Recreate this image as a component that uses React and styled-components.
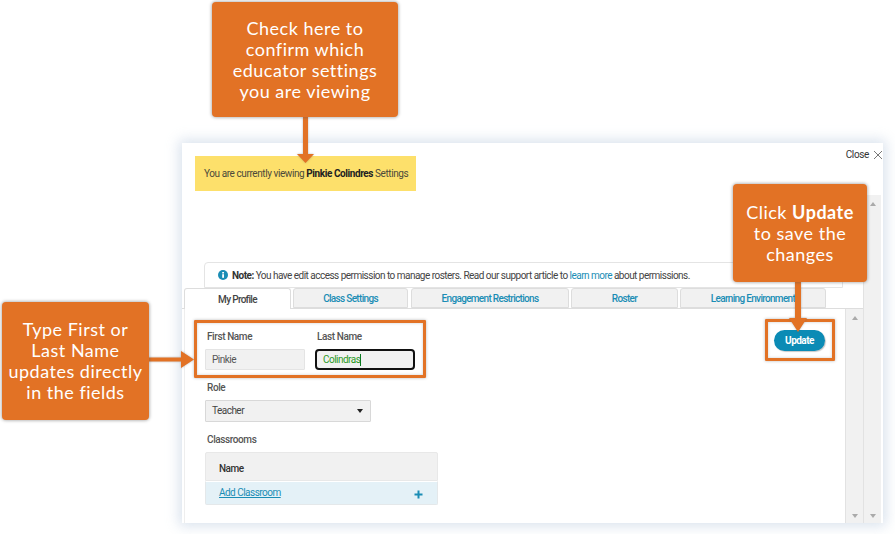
import React from "react";
import styled, { createGlobalStyle } from "styled-components";

const Global = createGlobalStyle`
  html, body { margin: 0; padding: 0; background: #fff; }
  body { font-family: "Roboto", "Liberation Sans", sans-serif; }
`;

const Stage = styled.div`
  position: relative;
  width: 895px;
  height: 534px;
  overflow: hidden;
  padding: 143px 12px 11px 182px;
  box-sizing: border-box;
`;

const Modal = styled.div`
  position: relative;
  height: 380px;
  display: flex;
  flex-direction: column;
  background: #fff;
  box-shadow: 0 0 12px 3px rgba(170, 190, 215, 0.45);
  color: #444;
  font-size: 10px;
  letter-spacing: -0.52px;
`;

const TopArea = styled.div`
  height: 119px;
  box-sizing: border-box;
  padding: 13px 13px 0;
  display: flex;
  justify-content: space-between;
  align-items: flex-start;
`;

const Banner = styled.div`
  width: 221px;
  height: 35px;
  box-sizing: border-box;
  padding-left: 9px;
  display: flex;
  align-items: center;
  background: #fde06b;
  color: #4c4a3a;
  font-size: 10px;
  letter-spacing: -0.42px;
  white-space: pre;
  b { color: #222; font-weight: 700; }
`;

const Close = styled.div`
  display: flex;
  align-items: center;
  gap: 4px;
  margin: -7px -13px 0 0;
  color: #333;
  font-size: 10px;
  letter-spacing: -0.35px;
  svg { display: block; }
`;

const Body = styled.div`
  flex: 1;
  display: flex;
  min-height: 0;
`;

const Main = styled.div`
  flex: 1;
  display: flex;
  flex-direction: column;
  min-width: 0;
`;

const Note = styled.div`
  margin-left: 22px;
  width: 639px;
  height: 26px;
  box-sizing: border-box;
  display: flex;
  align-items: center;
  padding-left: 13px;
  gap: 4px;
  border: 1px solid #e4e4e4;
  border-radius: 4px 0 0 0;
  white-space: pre;
  color: #444;
  b { color: #333; font-weight: 700; }
`;

const NoteLink = styled.span`
  color: #1a8db5;
`;

const Tabs = styled.div`
  display: flex;
  gap: 2px;
  height: 21px;
  padding-left: 2px;
  border-bottom: 1px solid #ddd;
  box-sizing: border-box;
`;

const Tab = styled.div`
  width: ${(p) => p.$w}px;
  margin-right: ${(p) => p.$gap || 0}px;
  height: ${(p) => (p.$active ? 21 : 20)}px;
  box-sizing: border-box;
  display: flex;
  align-items: center;
  justify-content: center;
  background: ${(p) => (p.$active ? "#fff" : "#f1f1f1")};
  border: 1px solid #ddd;
  border-bottom: ${(p) => (p.$active ? "none" : "1px solid #ddd")};
  border-radius: 3px 3px 0 0;
  font-weight: 500;
  letter-spacing: -0.68px;
  color: ${(p) => (p.$active ? "#444" : "#1a8db5")};
`;

const Pane = styled.div`
  flex: 1;
  display: flex;
  min-height: 0;
`;

const Form = styled.div`
  flex: 1;
  padding: 21px 0 0 20px;
  display: flex;
  flex-direction: column;
  align-items: flex-start;
  border-left: 1px solid #eee;
  margin-left: 2px;
  box-sizing: border-box;
  position: relative;
`;

const NameRow = styled.div`
  display: flex;
  gap: 10px;
`;

const Field = styled.div`
  display: flex;
  flex-direction: column;
`;

const Label = styled.div`
  height: ${(p) => p.$h}px;
  padding-left: 2px;
  margin-top: ${(p) => p.$top || 0}px;
  color: #555;
  font-weight: 500;
  font-size: 10px;
  letter-spacing: -0.4px;
  line-height: 13px;
`;

const Input = styled.div`
  width: 100px;
  height: 21px;
  box-sizing: border-box;
  display: flex;
  align-items: center;
  padding-left: ${(p) => (p.$focus ? 6 : 6)}px;
  background: #f1f1f1;
  border: ${(p) => (p.$focus ? "2px solid #111" : "1px solid #e4e4e4")};
  border-radius: ${(p) => (p.$focus ? 4 : 1)}px;
  color: ${(p) => (p.$focus ? "#2a9a1f" : "#555")};
`;

const Caret = styled.span`
  width: 1px;
  height: 12px;
  background: #0a7a20;
`;

const Select = styled.div`
  width: 166px;
  height: 22px;
  box-sizing: border-box;
  display: flex;
  align-items: center;
  justify-content: space-between;
  padding: 0 7px 1px 6px;
  background: #f1f1f1;
  border: 1px solid #d8d8d8;
  border-radius: 1px;
  color: #444;
  &::after {
    content: "";
    border-left: 3.5px solid transparent;
    border-right: 3.5px solid transparent;
    border-top: 4px solid #222;
  }
`;

const Table = styled.div`
  width: 233px;
`;

const TableHead = styled.div`
  height: 29px;
  box-sizing: border-box;
  display: flex;
  align-items: center;
  padding: 3px 0 0 13px;
  background: #f1f1f1;
  border: 1px solid #e8e8e8;
  border-radius: 2px 2px 0 0;
  color: #333;
  font-weight: 500;
`;

const TableRow = styled.div`
  height: 24px;
  box-sizing: border-box;
  display: flex;
  align-items: center;
  justify-content: space-between;
  padding: 0 14px 0 13px;
  background: #e4f1f7;
  border: 1px solid #e4e8ea;
  border-top-color: #fff;
  border-radius: 0 0 2px 2px;
  color: #1a8db5;
  span { text-decoration: underline; margin-top: -2px; }
`;

const Plus = styled.svg`
  display: block;
  margin-top: 2px;
`;

const UpdateButton = styled.div`
  position: absolute;
  top: 21px;
  right: 20px;
  width: 51px;
  height: 21px;
  box-sizing: border-box;
  padding-bottom: 1px;
  display: flex;
  align-items: center;
  justify-content: center;
  background: #0b8bb5;
  color: #fff;
  font-weight: 700;
  border-radius: 11px;
  box-shadow: 1px 1px 1px #c8c8c8;
`;

const Scrollbar = styled.div`
  width: 18px;
  background: #f1f1f1;
  border-left: 1px solid #e2e2e2;
  box-sizing: border-box;
  display: flex;
  flex-direction: column;
  justify-content: space-between;
  align-items: center;
  padding: 7px 0 5px;
  flex: none;
  margin-top: ${(p) => p.$top || 0}px;
  margin-right: ${(p) => p.$right || 0}px;
`;

const ArrowUp = styled.i`
  border-left: 3.5px solid transparent;
  border-right: 3.5px solid transparent;
  border-bottom: 4px solid #aaa;
`;

const ArrowDown = styled.i`
  border-left: 3.5px solid transparent;
  border-right: 3.5px solid transparent;
  border-top: 4px solid #aaa;
`;

const Callout = styled.div`
  position: absolute;
  left: ${(p) => p.$x}px;
  top: ${(p) => p.$y}px;
  width: ${(p) => p.$w}px;
  height: ${(p) => p.$h}px;
  box-sizing: border-box;
  display: flex;
  align-items: center;
  justify-content: center;
  text-align: center;
  background: #e27225;
  color: #fff;
  border-radius: 4px;
  box-shadow: 0 0 3px 1px rgba(90, 90, 90, 0.4);
  font-family: "Lato", "Open Sans", sans-serif;
  font-size: 18px;
  line-height: 21px;
  letter-spacing: 0.5px;
  b { font-weight: 700; }
`;

const Frame = styled.div`
  position: absolute;
  left: ${(p) => p.$x}px;
  top: ${(p) => p.$y}px;
  width: ${(p) => p.$w}px;
  height: ${(p) => p.$h}px;
  box-sizing: border-box;
  border: 3px solid #e27225;
  border-radius: 1px;
  box-shadow: 0 0 3px rgba(90, 90, 90, 0.45), inset 0 0 3px rgba(90, 90, 90, 0.3);
`;

const Pointer = styled.svg`
  position: absolute;
  left: ${(p) => p.$x}px;
  top: ${(p) => p.$y}px;
  filter: drop-shadow(0 0 1px rgba(90, 90, 90, 0.4));
`;

export default function App() {
  return (
    <>
      <Global />
      <Stage>
        <Modal>
          <TopArea>
            <Banner>
              You are currently viewing <b>Pinkie Colindres</b> Settings
            </Banner>
            <Close>
              Close
              <svg width="10" height="10" viewBox="0 0 10 10">
                <path d="M1 1l8 8M9 1l-8 8" stroke="#555" strokeWidth="0.8" fill="none" />
              </svg>
            </Close>
          </TopArea>
          <Body>
            <Main>
              <Note>
                <svg width="10" height="10" viewBox="0 0 10 10">
                  <circle cx="5" cy="5" r="5" fill="#1a8db5" />
                  <rect x="4.2" y="4.2" width="1.8" height="3.6" fill="#fff" />
                  <rect x="4.2" y="2" width="1.8" height="1.5" fill="#fff" />
                </svg>
                <span>
                  <b>Note:</b> You have edit access permission to manage rosters. Read our support article to{" "}
                  <NoteLink>learn more</NoteLink> about permissions.
                </span>
              </Note>
              <Tabs>
                <Tab $w={107} $active>My Profile</Tab>
                <Tab $w={115} $gap={1}>Class Settings</Tab>
                <Tab $w={158}>Engagement Restrictions</Tab>
                <Tab $w={107}>Roster</Tab>
                <Tab $w={146}>Learning Environment</Tab>
              </Tabs>
              <Pane>
                <Form>
                  <NameRow>
                    <Field>
                      <Label $h={19}>First Name</Label>
                      <Input>Pinkie</Input>
                    </Field>
                    <Field>
                      <Label $h={19}>Last Name</Label>
                      <Input $focus>Colindras<Caret /></Input>
                    </Field>
                  </NameRow>
                  <Label $h={19} $top={11}>Role</Label>
                  <Select>Teacher</Select>
                  <Label $h={19} $top={11}>Classrooms</Label>
                  <Table>
                    <TableHead>Name</TableHead>
                    <TableRow>
                      <span>Add Classroom</span>
                      <Plus width="9" height="9" viewBox="0 0 9 9">
                        <path d="M4.500 0.500v8M0.500 4.500h8" stroke="#1a8db5" strokeWidth="2" />
                      </Plus>
                    </TableRow>
                  </Table>
                  <UpdateButton>Update</UpdateButton>
                </Form>
                <Scrollbar>
                  <ArrowUp />
                  <ArrowDown />
                </Scrollbar>
              </Pane>
            </Main>
            <Scrollbar $top={-67} $right={2}>
              <ArrowUp />
              <ArrowDown />
            </Scrollbar>
          </Body>
        </Modal>

        <Frame $x={194} $y={320} $w={232} $h={58} />
        <Frame $x={765} $y={319} $w={70} $h={42} />

        <Pointer $x={295} $y={116} width="20" height="48" viewBox="0 0 20 48">
          <path d="M8 0h5v38h6l-8.500 9-8.500-9h6z" fill="#e27225" />
        </Pointer>
        <Pointer $x={148} $y={350} width="47" height="20" viewBox="0 0 47 20">
          <path d="M0 7.500h33v-6.500l13 8.500-13 8.500v-6.500h-33z" fill="#e27225" />
        </Pointer>
        <Pointer $x={788} $y={281} width="20" height="52" viewBox="0 0 20 52">
          <path d="M7 0h6v37h6l-9 14-9-14h6z" fill="#e27225" />
        </Pointer>

        <Callout $x={212} $y={2} $w={186} $h={115}>
          <div>Check here to<br />confirm which<br />educator settings<br />you are viewing</div>
        </Callout>
        <Callout $x={733} $y={184} $w={134} $h={98}>
          <div>Click <b>Update</b><br />to save the<br />changes</div>
        </Callout>
        <Callout $x={2} $y={302} $w={147} $h={118}>
          <div>Type First or<br />Last Name<br />updates directly<br />in the fields</div>
        </Callout>
      </Stage>
    </>
  );
}
